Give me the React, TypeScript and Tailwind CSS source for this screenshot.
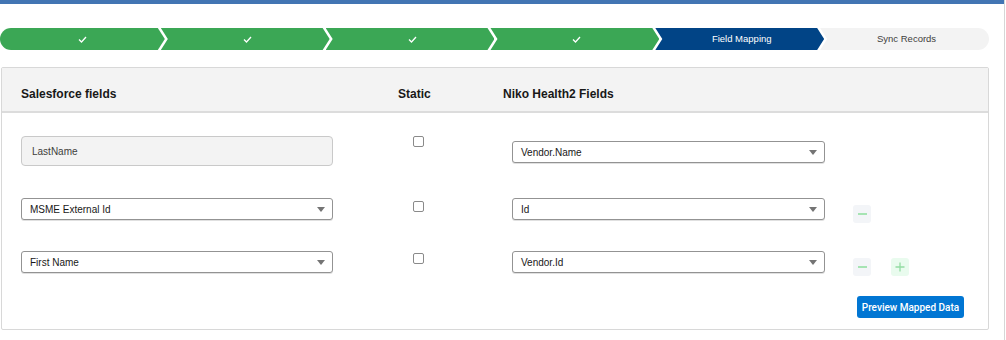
import React from 'react';

const steps = [
  { label: '', state: 'done' },
  { label: '', state: 'done' },
  { label: '', state: 'done' },
  { label: '', state: 'done' },
  { label: 'Field Mapping', state: 'current' },
  { label: 'Sync Records', state: 'todo' },
];

function Check() {
  return (
    <svg width="9" height="7" viewBox="0 0 9 7" fill="none">
      <polyline points="1,3.5 3.5,6 8,1" stroke="white" strokeWidth="1.3" />
    </svg>
  );
}

function Stepper() {
  return (
    <div className="flex h-[22px] w-[989px]">
      {steps.map((s, i) => {
        const first = i === 0;
        const last = i === steps.length - 1;
        const bg =
          s.state === 'done' ? 'bg-[#3ba755]' : s.state === 'current' ? 'bg-[#014486] text-white' : 'bg-[#f3f3f3] text-[#3e3e3c]';
        const clip = first
          ? '[clip-path:polygon(0_0,calc(100%-7px)_0,100%_50%,calc(100%-7px)_100%,0_100%)] rounded-l-full'
          : last
          ? '[clip-path:polygon(0_0,100%_0,100%_100%,0_100%,7px_50%)] rounded-r-full -ml-1'
          : '[clip-path:polygon(0_0,calc(100%-7px)_0,100%_50%,calc(100%-7px)_100%,0_100%,7px_50%)] -ml-1';
        return (
          <div
            key={i}
            className={`flex-1 flex items-center justify-center text-[9.5px] ${bg} ${clip} ${first ? '' : 'pl-[4px]'}`}
          >
            {s.state === 'done' ? <Check /> : s.label}
          </div>
        );
      })}
    </div>
  );
}

function Select({ value, width }: { value: string; width: string }) {
  return (
    <div
      className={`${width} h-[22px] flex items-center justify-between rounded-[3px] border border-[#939393] bg-white pl-[8px] pr-[7px] shadow-[0_1px_0_#e0e0e0] text-[10px] text-[#181818]`}
    >
      <span>{value}</span>
      <svg width="8" height="5" viewBox="0 0 8 5">
        <polygon points="0,0 8,0 4,5" fill="#747474" />
      </svg>
    </div>
  );
}

function Checkbox() {
  return <div className="w-[11px] h-[11px] rounded-[2px] border border-[#8a8a8a] bg-white" />;
}

function Minus() {
  return (
    <div className="w-[18px] h-[18px] rounded-[3px] bg-[#f3f5f8] flex items-center justify-center">
      <div className="w-[9px] h-[2px] bg-[#a6e4b3]" />
    </div>
  );
}

function Plus() {
  return (
    <div className="w-[18px] h-[18px] rounded-[3px] bg-[#e9fbee] flex items-center justify-center">
      <svg width="10" height="10" viewBox="0 0 10 10">
        <path d="M5 0.5v9M0.5 5h9" stroke="#93dca2" strokeWidth="1.3" />
      </svg>
    </div>
  );
}

export default function App() {
  return (
    <div className="w-[1006px] h-[340px] bg-white font-['Liberation_Sans',Arial,sans-serif] overflow-hidden">
      <div className="w-[1005px] h-[340px] border-r border-[#d6d6d6] flex flex-col">
        <div className="h-[4px] bg-[#4275b3]" />
        <div className="pt-[24px]">
          <Stepper />
        </div>

        <div className="mt-[17px] ml-px w-[988px] h-[263px] border border-[#d8d8d8] rounded-[2px] flex flex-col">
          <div className="bg-[#f3f3f3] border-b-2 border-[#dcdcdc] pt-[19px] pb-[10px] pl-[19px] flex text-[12px] leading-[14px] font-bold text-[#181818]">
            <div className="w-[377px]">Salesforce fields</div>
            <div className="w-[105px]">Static</div>
            <div>Niko Health2 Fields</div>
          </div>

          <div className="flex items-start pl-[19px] mt-[23px]">
            <div className="w-[312px] h-[30px] rounded-[4px] border border-[#c9c9c9] bg-[#f3f3f3] flex items-center pl-[10px] text-[10px] text-[#3e3e3c]">
              LastName
            </div>
            <div className="ml-[80px]">
              <Checkbox />
            </div>
            <div className="ml-[88px] mt-[5px]">
              <Select value="Vendor.Name" width="w-[313px]" />
            </div>
          </div>

          <div className="flex items-start pl-[19px] mt-[32px]">
            <Select value="MSME External Id" width="w-[312px]" />
            <div className="ml-[80px] mt-[3px]">
              <Checkbox />
            </div>
            <div className="ml-[88px]">
              <Select value="Id" width="w-[313px]" />
            </div>
            <div className="ml-[28px] mt-[7px]">
              <Minus />
            </div>
          </div>

          <div className="flex items-start pl-[19px] mt-[28px]">
            <Select value="First Name" width="w-[312px]" />
            <div className="ml-[80px] mt-[2px]">
              <Checkbox />
            </div>
            <div className="ml-[88px]">
              <Select value="Vendor.Id" width="w-[313px]" />
            </div>
            <div className="ml-[28px] mt-[7px] flex gap-[20px]">
              <Minus />
              <Plus />
            </div>
          </div>

          <div className="flex justify-end pr-[24px] mt-[20px]">
            <button className="w-[107px] h-[22px] rounded-[3px] bg-[#0176d3] text-white text-[10px] font-medium font-['Roboto',sans-serif] flex items-center justify-center">
              Preview Mapped Data
            </button>
          </div>
        </div>
      </div>
    </div>
  );
}
